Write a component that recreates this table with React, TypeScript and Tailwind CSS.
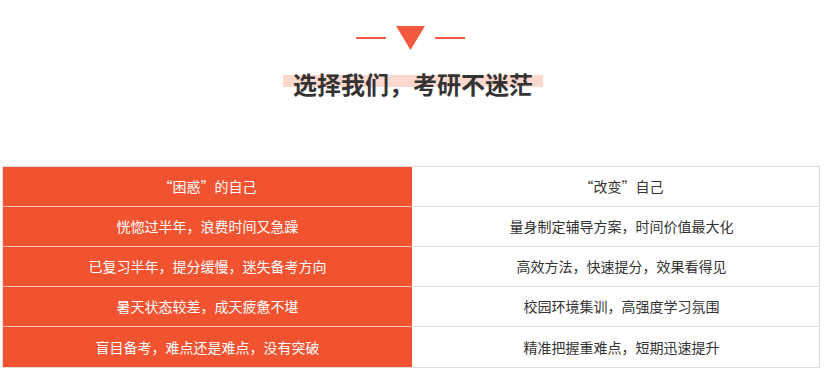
const rows = [
  { left: "“困惑”的自己", right: "“改变”自己" },
  { left: "恍惚过半年，浪费时间又急躁", right: "量身制定辅导方案，时间价值最大化" },
  { left: "已复习半年，提分缓慢，迷失备考方向", right: "高效方法，快速提分，效果看得见" },
  { left: "暑天状态较差，成天疲惫不堪", right: "校园环境集训，高强度学习氛围" },
  { left: "盲目备考，难点还是难点，没有突破", right: "精准把握重难点，短期迅速提升" },
];

export default function App() {
  return (
    <div
      className="w-[826px] h-[374px] bg-white overflow-hidden"
      style={{ fontFamily: '"Noto Sans CJK SC", "Liberation Sans", sans-serif' }}
    >
      {/* heading ornament */}
      <div className="pt-[26px] flex justify-center items-center gap-[10px] pr-[5px]">
        <div className="w-[30px] h-[2px] bg-[#f15a3c]" />
        <svg width="29" height="24" viewBox="0 0 29 24">
          <polygon points="0,0 29,0 14.5,24" fill="#f15a3c" />
        </svg>
        <div className="w-[30px] h-[2px] bg-[#f15a3c]" />
      </div>

      <div className="mt-[18px] flex justify-center">
        <div className="relative px-[10px]">
          <div className="absolute left-0 right-0 top-[7px] h-[12px] bg-[#fcd8cf]" />
          <h2 className="relative text-[24px] leading-[32px] font-bold text-[#333]">
            选择我们，考研不迷茫
          </h2>
        </div>
      </div>

      {/* comparison table */}
      <div className="mt-[66px] ml-[2px] w-[818px] border border-[#dcdcdc] text-[14px]">
        {rows.map((r, i) => (
          <div key={i} className="grid grid-cols-[409px_1fr] h-[40px]">
            <div
              className={
                "bg-[#f15330] text-white flex items-center justify-center " +
                (i < rows.length - 1 ? "border-b border-[#f8c7b8]" : "")
              }
            >
              {r.left}
            </div>
            <div
              className={
                "text-[#333] flex items-center justify-center pl-[12px] " +
                (i < rows.length - 1 ? "border-b border-[#dcdcdc]" : "")
              }
            >
              {r.right}
            </div>
          </div>
        ))}
      </div>
    </div>
  );
}
